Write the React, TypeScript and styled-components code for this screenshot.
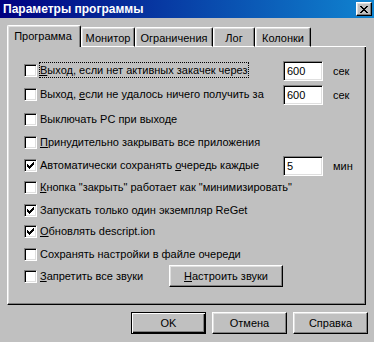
import React from "react";
import styled, { createGlobalStyle, css } from "styled-components";

const GlobalStyle = createGlobalStyle`
  html, body { margin: 0; padding: 0; background: #c0c0c0; }
  body {
    font-family: "Liberation Sans", Arial, sans-serif;
    font-size: 11px;
    color: #000;
  }
`;

const raised = css`
  border: 1px solid;
  border-color: #fff #000 #000 #fff;
  box-shadow: inset -1px -1px #808080, inset 1px 1px #dfdfdf;
`;

const sunken = css`
  border: 1px solid;
  border-color: #808080 #fff #fff #808080;
  box-shadow: inset 1px 1px #000, inset -1px -1px #dfdfdf;
`;

const Window = styled.div`
  width: 374px;
  height: 342px;
  background: #c0c0c0;
  display: flex;
  flex-direction: column;
  overflow: hidden;
`;

const TitleBar = styled.div`
  flex: 0 0 18px;
  height: 18px;
  display: flex;
  align-items: center;
  justify-content: space-between;
  padding: 0 2px 0 3px;
  background: linear-gradient(to right, #000080, #1084d0);
`;

const TitleText = styled.span`
  color: #fff;
  font-weight: bold;
  font-size: 12px;
  white-space: nowrap;
`;

const CloseButton = styled.div`
  box-sizing: border-box;
  width: 16px;
  height: 14px;
  background: #c0c0c0;
  ${raised};
  display: flex;
  align-items: center;
  justify-content: center;
  padding-right: 1px;
`;

const Body = styled.div`
  display: flex;
  flex-direction: column;
  padding: 7px 0 0 7px;
`;

const TabStrip = styled.div`
  display: flex;
  align-items: flex-end;
  width: 359px;
  height: 22px;
`;

const Tab = styled.div<{ $w: number; $active?: boolean }>`
  box-sizing: border-box;
  flex: 0 0 ${(p) => p.$w}px;
  height: 20px;
  display: flex;
  align-items: center;
  justify-content: center;
  white-space: nowrap;
  border: 1px solid;
  border-color: #fff #000 #fff #fff;
  border-radius: 2px 2px 0 0;
  box-shadow: inset -1px 0 #808080, inset 1px 1px #dfdfdf;
  padding-top: 1px;
  ${(p) =>
    p.$active &&
    css`
      height: 22px;
      border-bottom: none;
      padding-top: 0;
      padding-bottom: 2px;
      padding-right: 2px;
    `}
`;

const TabFiller = styled.div`
  flex: 1;
  height: 1px;
  background: #fff;
`;

const Panel = styled.div`
  box-sizing: border-box;
  width: 359px;
  height: 258px;
  border: 1px solid;
  border-top: none;
  border-color: #fff #000 #000 #fff;
  box-shadow: inset -1px -1px #808080, inset 1px 0 #dfdfdf;
  padding: 13px 0 0 16px;
  display: flex;
  flex-direction: column;
`;

const Row = styled.div<{ $gap: number }>`
  display: flex;
  align-items: center;
  height: 20px;
  margin-bottom: ${(p) => p.$gap}px;
`;

const CheckBox = styled.div`
  box-sizing: border-box;
  flex: 0 0 13px;
  width: 13px;
  height: 13px;
  background: #fff;
  ${sunken};
  margin-right: 2px;
  display: flex;
  align-items: center;
  justify-content: center;
`;

const LabelArea = styled.div<{ $w?: number }>`
  display: flex;
  align-items: center;
  ${(p) => (p.$w ? `flex: 0 0 ${p.$w}px;` : `flex: 1;`)}
`;

const Label = styled.span<{ $focus?: boolean }>`
  border: 1px dotted ${(p) => (p.$focus ? "#000" : "transparent")};
  line-height: 14px;
  white-space: nowrap;
`;

const Key = styled.span`
  text-decoration: underline;
`;

const Field = styled.div`
  box-sizing: border-box;
  flex: 0 0 40px;
  width: 40px;
  height: 20px;
  background: #fff;
  ${sunken};
  display: flex;
  align-items: center;
  padding-left: 3px;
  margin-top: 2px;
`;

const Unit = styled.div`
  box-sizing: border-box;
  flex: 0 0 42px;
  padding-left: 10px;
  margin-top: 2px;
`;

const Button = styled.div<{ $w: number; $default?: boolean }>`
  box-sizing: border-box;
  width: ${(p) => p.$w}px;
  height: 22px;
  display: flex;
  align-items: center;
  justify-content: center;
  white-space: nowrap;
  background: #c0c0c0;
  ${raised};
  ${(p) =>
    p.$default &&
    css`
      border-color: #000;
      box-shadow: inset 1px 1px #fff, inset -1px -1px #000, inset -2px -2px #808080;
    `}
`;

const ButtonRow = styled.div`
  display: flex;
  justify-content: flex-end;
  gap: 6px;
  margin-top: 7px;
  padding-right: 6px;
`;

const CheckMark = () => (
  <svg width="7" height="7" viewBox="0 0 7 7" shapeRendering="crispEdges">
    {[2, 3, 4, 3, 2, 1, 0].map((y, x) => (
      <rect key={x} x={x} y={y} width={1} height={3} fill="#000" />
    ))}
  </svg>
);

const CloseGlyph = () => {
  const px: [number, number][] = [
    [0, 0], [1, 0], [6, 0], [7, 0],
    [1, 1], [2, 1], [5, 1], [6, 1],
    [2, 2], [3, 2], [4, 2], [5, 2],
    [3, 3], [4, 3],
    [2, 4], [3, 4], [4, 4], [5, 4],
    [1, 5], [2, 5], [5, 5], [6, 5],
    [0, 6], [1, 6], [6, 6], [7, 6],
  ];
  return (
    <svg width="8" height="7" viewBox="0 0 8 7" shapeRendering="crispEdges">
      {px.map(([x, y], i) => (
        <rect key={i} x={x} y={y} width={1} height={1} fill="#000" />
      ))}
    </svg>
  );
};

type Opt = {
  label: React.ReactNode;
  checked?: boolean;
  focus?: boolean;
  value?: string;
  unit?: string;
  gap: number;
};

const options: Opt[] = [
  { label: <><Key>В</Key>ыход, если нет активных закачек через</>, focus: true, value: "600", unit: "сек", gap: 4 },
  { label: <>Выход, <Key>е</Key>сли не удалось ничего получить за</>, value: "600", unit: "сек", gap: 5 },
  { label: <>Выключать PC при выходе</>, gap: 3 },
  { label: <><Key>П</Key>ринудительно закрывать все приложения</>, gap: 3 },
  { label: <>Автоматически сохранять <Key>о</Key>чередь каждые</>, checked: true, value: "5", unit: "мин", gap: 2 },
  { label: <><Key>К</Key>нопка "закрыть" работает как "минимизировать"</>, gap: 3 },
  { label: <>Запускать только один экземпляр ReGet</>, checked: true, gap: 1 },
  { label: <><Key>О</Key>бновлять descript.ion</>, checked: true, gap: 3 },
  { label: <>Сохранять настройки в файле очереди</>, gap: 2 },
];

const tabs = [
  { name: "Программа", w: 74, active: true },
  { name: "Монитор", w: 54 },
  { name: "Ограничения", w: 78 },
  { name: "Лог", w: 42 },
  { name: "Колонки", w: 56 },
];

export default function App() {
  return (
    <>
      <GlobalStyle />
      <Window>
        <TitleBar>
          <TitleText>Параметры программы</TitleText>
          <CloseButton>
            <CloseGlyph />
          </CloseButton>
        </TitleBar>
        <Body>
          <TabStrip>
            {tabs.map((t) => (
              <Tab key={t.name} $w={t.w} $active={t.active}>
                {t.name}
              </Tab>
            ))}
            <TabFiller />
          </TabStrip>
          <Panel>
            {options.map((o, i) => (
              <Row key={i} $gap={o.gap}>
                <CheckBox>{o.checked && <CheckMark />}</CheckBox>
                <LabelArea>
                  <Label $focus={o.focus}>{o.label}</Label>
                </LabelArea>
                {o.value && (
                  <>
                    <Field>{o.value}</Field>
                    <Unit>{o.unit}</Unit>
                  </>
                )}
              </Row>
            ))}
            <Row $gap={0}>
              <CheckBox />
              <LabelArea $w={130}>
                <Label>
                  <Key>З</Key>апретить все звуки
                </Label>
              </LabelArea>
              <Button $w={114}>
                <span>
                  <Key>Н</Key>астроить звуки
                </span>
              </Button>
            </Row>
          </Panel>
          <ButtonRow>
            <Button $w={75} $default>OK</Button>
            <Button $w={75}>Отмена</Button>
            <Button $w={75}>Справка</Button>
          </ButtonRow>
        </Body>
      </Window>
    </>
  );
}
